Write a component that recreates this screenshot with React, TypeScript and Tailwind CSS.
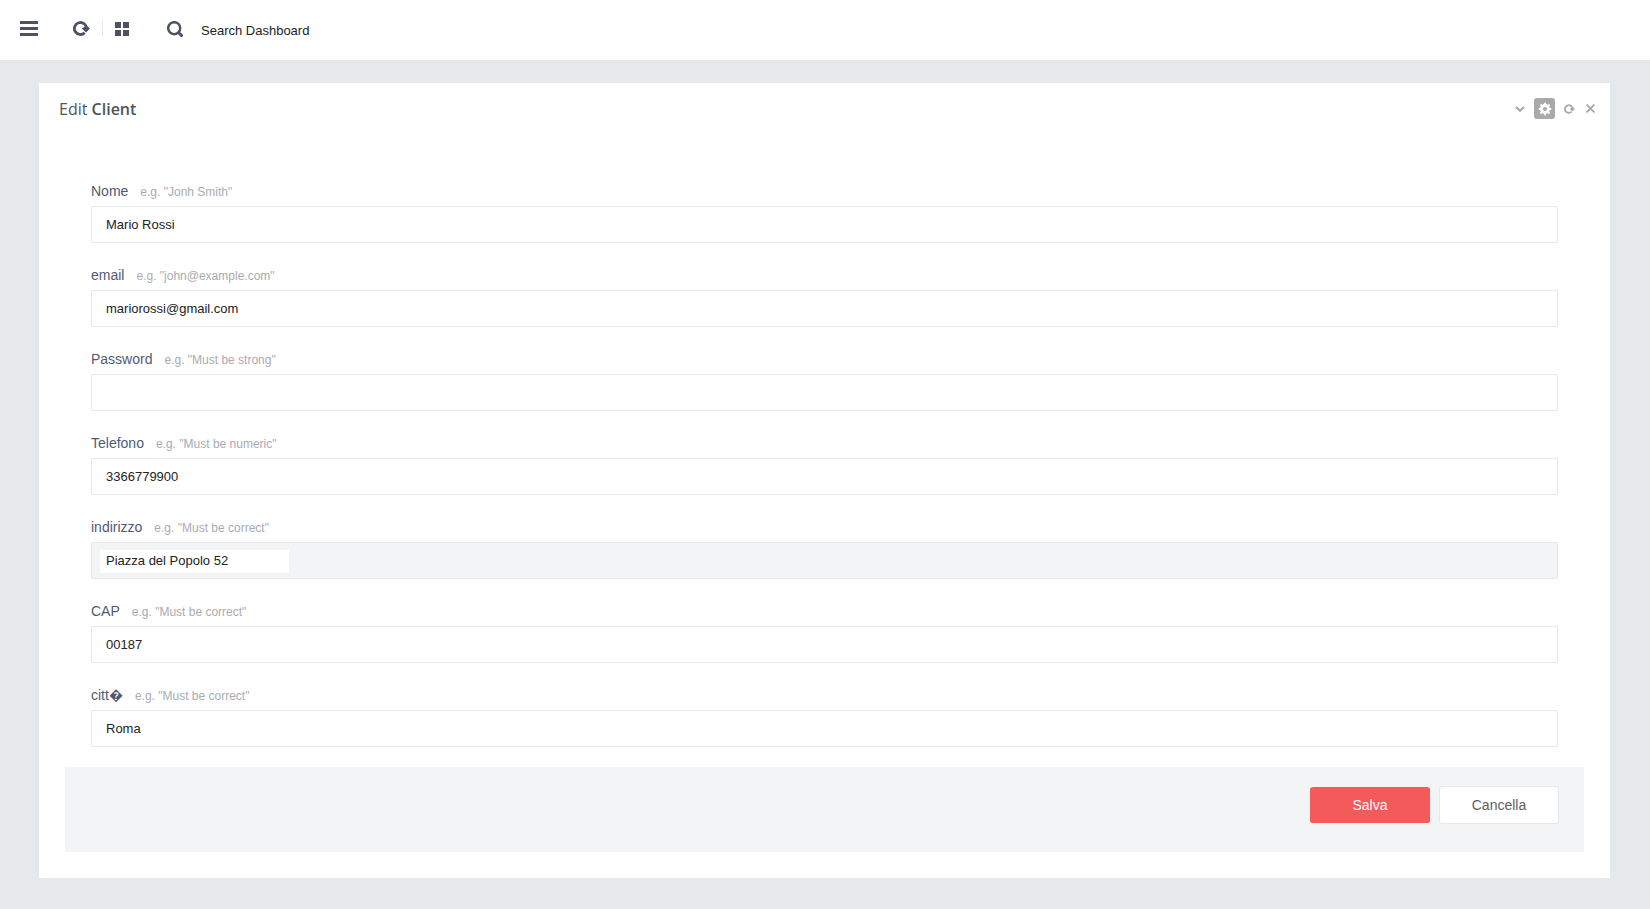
import React, { useState } from "react";

type Field = {
  id: string;
  label: string;
  hint: string;
  value: string;
  type?: string;
  boxed?: boolean;
};

const fields: Field[] = [
  { id: "nome", label: "Nome", hint: 'e.g. "Jonh Smith"', value: "Mario Rossi" },
  { id: "email", label: "email", hint: 'e.g. "john@example.com"', value: "mariorossi@gmail.com" },
  { id: "password", label: "Password", hint: 'e.g. "Must be strong"', value: "", type: "password" },
  { id: "telefono", label: "Telefono", hint: 'e.g. "Must be numeric"', value: "3366779900" },
  { id: "indirizzo", label: "indirizzo", hint: 'e.g. "Must be correct"', value: "Piazza del Popolo 52", boxed: true },
  { id: "cap", label: "CAP", hint: 'e.g. "Must be correct"', value: "00187" },
  { id: "citta", label: "citt\uFFFD", hint: 'e.g. "Must be correct"', value: "Roma" },
];

const ReloadIcon = ({ className }: { className: string }) => (
  <svg viewBox="0 0 17 15" className={className} aria-hidden="true">
    <path d="M11.7 11.7A6 6 0 1 1 13.4 7.5" fill="none" stroke="currentColor" strokeWidth="2.8" />
    <path d="M8.6 7.2l3.4-1.4 2.6-.6 2.4 2.4-4 3.8z" fill="currentColor" />
  </svg>
);

const MenuIcon = () => (
  <svg viewBox="0 0 18 15" className="h-[15px] w-[18px]" aria-hidden="true">
    <path d="M0 0h18v3H0zM0 6h18v3H0zM0 12h18v3H0z" fill="currentColor" />
  </svg>
);

const GridIcon = () => (
  <svg viewBox="0 0 14 14" className="size-3.5" aria-hidden="true">
    <path d="M0 0h6v6H0zM8 0h6v6H8zM0 8h6v6H0zM8 8h6v6H8z" fill="currentColor" />
  </svg>
);

const SearchIcon = () => (
  <svg viewBox="0 0 16 16" className="size-4" fill="none" stroke="currentColor" aria-hidden="true">
    <circle cx="7.2" cy="7.2" r="6" strokeWidth="2.5" />
    <path d="M11.7 11.7l2.8 2.8" strokeWidth="3" strokeLinecap="round" />
  </svg>
);

const ChevronIcon = () => (
  <svg viewBox="0 0 10 6" className="h-1.5 w-2.5" aria-hidden="true">
    <path d="M1 1l4 3.7L9 1" fill="none" stroke="currentColor" strokeWidth="2.2" />
  </svg>
);

const GearIcon = () => (
  <svg viewBox="0 0 14 14" className="size-3.5" aria-hidden="true">
    <circle cx="7" cy="7" r="3.5" fill="none" stroke="currentColor" strokeWidth="3" />
    <path
      d="M7 .7v2.4M7 10.9v2.4M.7 7h2.4M10.9 7h2.4M2.5 2.5l1.8 1.8M9.7 9.7l1.8 1.8M2.5 11.5l1.8-1.8M9.7 4.3l1.8-1.8"
      stroke="currentColor"
      strokeWidth="2"
    />
  </svg>
);

const CloseIcon = () => (
  <svg viewBox="0 0 9 9" className="size-[9px]" aria-hidden="true">
    <path d="M.6.6l7.8 7.8M8.4.6L.6 8.4" stroke="currentColor" strokeWidth="1.9" />
  </svg>
);

const Header = () => {
  return (
    <header className="flex h-[60px] items-center bg-white px-5 text-[#4c5264]">
      <div className="flex items-center pb-[3px]">
        <button type="button" aria-label="Menu" className="mr-[35px]">
          <MenuIcon />
        </button>
        <button type="button" aria-label="Reload">
          <ReloadIcon className="h-[15px] w-[17px]" />
        </button>
        <span className="mx-3 h-[15px] w-px bg-[#e5e9ec]" />
        <button type="button" aria-label="Layout">
          <GridIcon />
        </button>
        <span className="ml-[38px]">
          <SearchIcon />
        </span>
      </div>
      <input
        type="text"
        aria-label="Search Dashboard"
        placeholder="Search Dashboard"
        className="ml-[18px] h-6 w-64 text-[13px] text-[#222222] outline-none placeholder:text-[#222222]"
      />
    </header>
  );
};

const PanelTools = () => {
  return (
    <div className="flex items-center text-[#a9a9a9]">
      <button type="button" aria-label="Collapse">
        <ChevronIcon />
      </button>
      <button
        type="button"
        aria-label="Settings"
        className="ml-[9px] flex size-[21px] items-center justify-center rounded-[3px] bg-[#a9a9a9] text-white"
      >
        <GearIcon />
      </button>
      <button type="button" aria-label="Refresh" className="ml-[9px]">
        <ReloadIcon className="h-2.5 w-[11px]" />
      </button>
      <button type="button" aria-label="Close" className="ml-[11px]">
        <CloseIcon />
      </button>
    </div>
  );
};

const FormField = ({ field }: { field: Field }) => {
  const [value, setValue] = useState(field.value);

  const input = (
    <input
      id={field.id}
      type={field.type ?? "text"}
      value={value}
      onChange={(e) => setValue(e.target.value)}
      className={
        field.boxed
          ? "h-[23px] w-[189px] bg-white px-1.5 pb-0.5 text-[13px] text-[#222222] outline-none"
          : "h-[37px] w-full rounded-xs border border-[#e5e9ec] bg-white px-3.5 text-[13px] text-[#222222] outline-none"
      }
    />
  );

  return (
    <div>
      <div className="mb-[5px] flex h-5 items-baseline gap-3 leading-5">
        <label htmlFor={field.id} className="text-sm leading-5 text-[#505b72]">
          {field.label}
        </label>
        <span className="text-xs leading-5 text-[#a9abaf]">{field.hint}</span>
      </div>
      {field.boxed ? (
        <div className="flex h-[37px] items-start rounded-xs border border-[#e5e9ec] bg-[#f3f4f6] px-2 pt-[7px]">
          {input}
        </div>
      ) : (
        input
      )}
    </div>
  );
};

export default function App() {
  return (
    <div className="min-h-screen bg-[#e5e9ec] font-['Liberation_Sans',Arial,sans-serif]">
      <Header />
      <main className="pt-[23px] pr-10 pb-[31px] pl-[39px]">
        <section className="bg-white pb-[26px]">
          <div className="flex h-[51px] items-center justify-between pr-[15px] pl-5">
            <h4 className="font-['Open_Sans',sans-serif] text-base text-[#505458]">
              Edit <span className="font-semibold">Client</span>
            </h4>
            <PanelTools />
          </div>
          <form className="px-[26px] pt-[47px]" onSubmit={(e) => e.preventDefault()}>
            <div className="flex flex-col gap-[22px] px-[26px] pb-5">
              {fields.map((field) => (
                <FormField key={field.id} field={field} />
              ))}
            </div>
            <div className="flex h-[85px] items-start justify-end gap-[9px] bg-[#f2f4f6] px-[25px] pt-[19px]">
              <button
                type="submit"
                className="h-[38px] w-[120px] rounded-[3px] border-y border-[#f2f4f6] bg-[#f55a5a] bg-clip-padding text-sm text-white"
              >
                Salva
              </button>
              <button
                type="button"
                className="h-[38px] w-[120px] rounded-[3px] border border-[#e5e9ec] bg-white text-sm text-[#5e5e5e]"
              >
                Cancella
              </button>
            </div>
          </form>
        </section>
      </main>
    </div>
  );
}
